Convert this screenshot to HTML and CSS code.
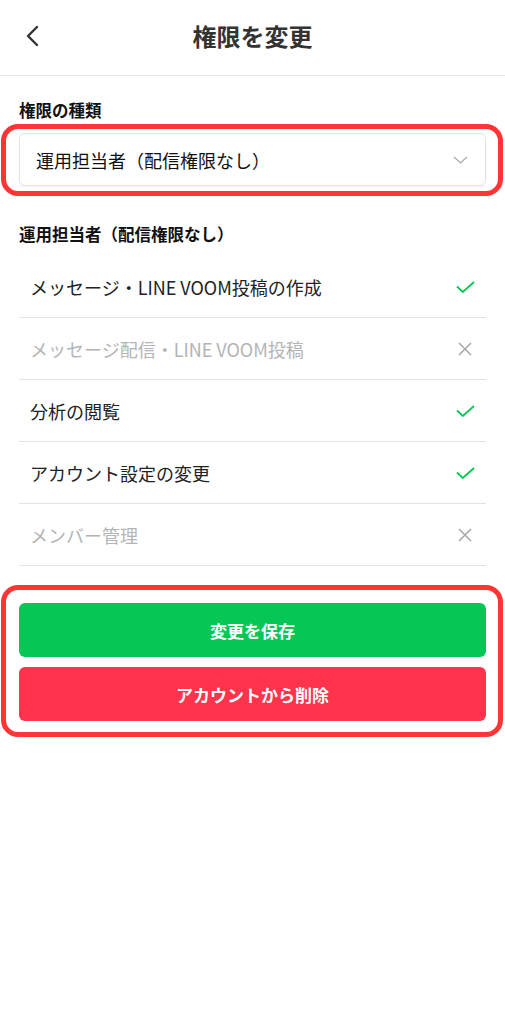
FILE: index.html
```html
<!DOCTYPE html>
<html lang="ja">
<head>
<meta charset="utf-8">
<title>権限を変更</title>
<link rel="stylesheet" href="styles.css">
</head>
<body>
<header class="header">
  <button class="back" aria-label="戻る">
    <svg width="14" height="22" viewBox="0 0 14 22"><path d="M12 2 L3 11 L12 20" fill="none" stroke="#333" stroke-width="2.4" stroke-linecap="round" stroke-linejoin="round"/></svg>
  </button>
  <h1 class="title">権限を変更</h1>
  <span class="spacer"></span>
</header>
<main class="content">
  <div class="label">権限の種類</div>
  <div class="mark mark-select">
    <div class="select">
      <span class="select-text">運用担当者（配信権限なし）</span>
      <svg class="chev" width="15" height="8" viewBox="0 0 15 8"><path d="M1 1 L7.5 7 L14 1" fill="none" stroke="#aaa" stroke-width="1.2"/></svg>
    </div>
  </div>
  <div class="section-title">運用担当者（配信権限なし）</div>
  <ul class="perms">
    <li class="perm"><span>メッセージ・LINE VOOM投稿の作成</span>
      <svg class="ok" width="19" height="12" viewBox="0 0 19 12"><path d="M1 5.5 L6.8 11 L18 1" fill="none" stroke="#06c755" stroke-width="1.8"/></svg></li>
    <li class="perm off"><span>メッセージ配信・LINE VOOM投稿</span>
      <svg class="ng" width="14" height="14" viewBox="0 0 14 14"><path d="M1 1 L13 13 M13 1 L1 13" fill="none" stroke="#aaa" stroke-width="1.6"/></svg></li>
    <li class="perm"><span>分析の閲覧</span>
      <svg class="ok" width="19" height="12" viewBox="0 0 19 12"><path d="M1 5.5 L6.8 11 L18 1" fill="none" stroke="#06c755" stroke-width="1.8"/></svg></li>
    <li class="perm"><span>アカウント設定の変更</span>
      <svg class="ok" width="19" height="12" viewBox="0 0 19 12"><path d="M1 5.5 L6.8 11 L18 1" fill="none" stroke="#06c755" stroke-width="1.8"/></svg></li>
    <li class="perm off"><span>メンバー管理</span>
      <svg class="ng" width="14" height="14" viewBox="0 0 14 14"><path d="M1 1 L13 13 M13 1 L1 13" fill="none" stroke="#aaa" stroke-width="1.6"/></svg></li>
  </ul>
  <div class="mark mark-buttons">
    <button class="btn btn-save">変更を保存</button>
    <button class="btn btn-delete">アカウントから削除</button>
  </div>
</main>
</body>
</html>
```

FILE: styles.css
```css
* { box-sizing: border-box; }
html, body { margin: 0; padding: 0; background: #fff; }
body {
  font-family: "Noto Sans CJK JP", "Noto Sans", sans-serif;
  color: #222;
  width: 505px;
}
.header {
  height: 76px;
  border-bottom: 1px solid #e6e6e6;
  display: grid;
  grid-template-columns: 60px 1fr 60px;
  align-items: center;
}
.back {
  border: 0;
  background: none;
  padding: 0 0 0 25px;
  margin: 0;
  height: 40px;
  display: flex;
  align-items: center;
  margin-top: -3px;
}
.title {
  margin: 0;
  text-align: center;
  font-size: 24px;
  font-weight: 700;
  color: #333;
  line-height: 30px;
  margin-top: -4px;
}
.content {
  padding: 0 19px;
}
.label {
  margin-top: 22px;
  font-size: 16.5px;
  font-weight: 700;
  line-height: 24px;
  color: #111;
}
.mark {
  border: 5px solid #ff3535;
  border-radius: 17px;
  margin: 0 -17px 0 -18px;
}
.mark-select {
  margin-top: 2px;
  padding: 4px 12px 5px 13px;
}
.select {
  height: 53px;
  border: 1px solid #e3e3e3;
  border-radius: 6px;
  display: flex;
  align-items: center;
  justify-content: space-between;
  padding: 0 17px 0 16px;
  box-shadow: 0 1px 2px rgba(0,0,0,0.05);
}
.select-text {
  font-size: 18px;
  color: #111;
}
.section-title {
  margin-top: 26px;
  font-size: 16.5px;
  font-weight: 700;
  line-height: 24px;
  color: #111;
}
.perms {
  list-style: none;
  margin: 10px 0 0;
  padding: 0;
}
.perm {
  height: 62px;
  border-bottom: 1px solid #e3e3e3;
  display: flex;
  align-items: center;
  justify-content: space-between;
  padding: 0 11px 0 11px;
  font-size: 18px;
  color: #222;
}
.perm.off { color: #b4b4b4; }
.perm .ng { margin-right: 3px; }
.mark-buttons {
  margin-top: 19px;
  padding: 13px 12px 11px 13px;
  display: flex;
  flex-direction: column;
  gap: 10px;
}
.btn {
  height: 54px;
  border: 0;
  border-radius: 6px;
  color: #fff;
  font-family: inherit;
  font-size: 17px;
  font-weight: 700;
  width: 100%;
}
.btn-save { background: #06c755; }
.btn-delete { background: #ff334b; }
```
